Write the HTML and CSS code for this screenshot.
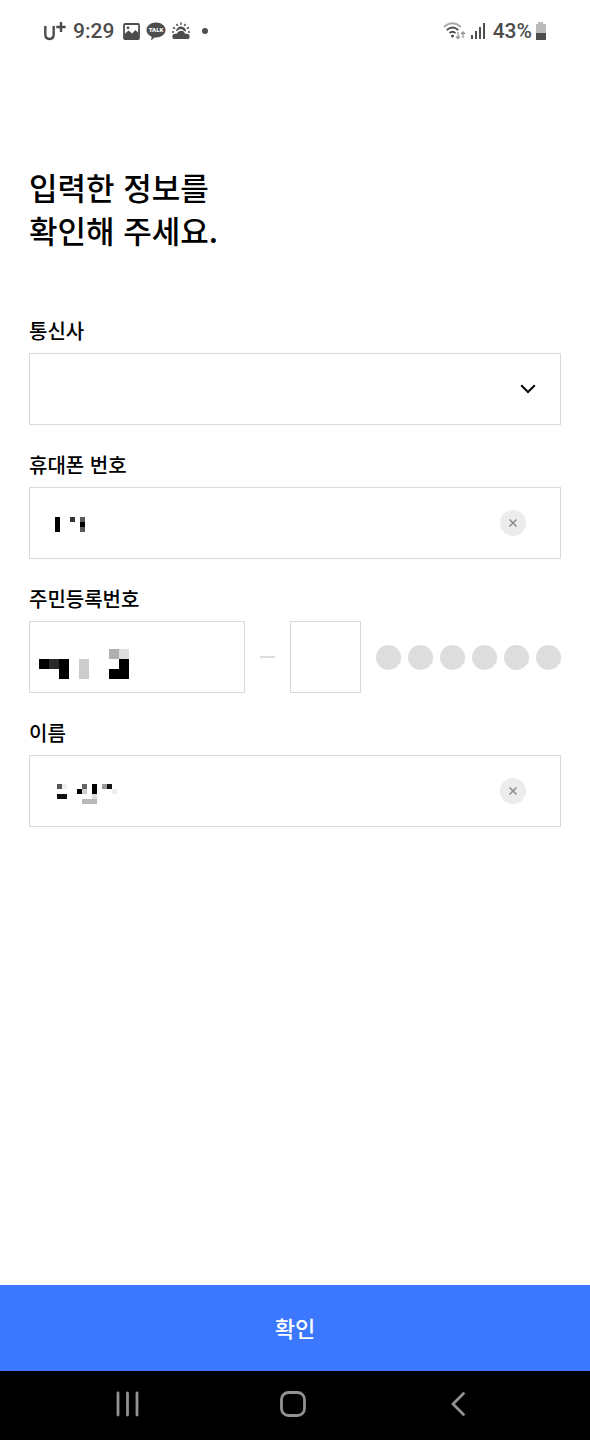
FILE: index.html
```
<!DOCTYPE html>
<html lang="ko">
<head>
    <meta charset="utf-8">
    <meta name="viewport" content="width=device-width, initial-scale=1">
    <title>입력한 정보를 확인해 주세요.</title>
    <link rel="stylesheet" href="styles.css">
</head>
<body>
    <header class="status">
        <div class="status-side">
            <svg class="carrier" width="24" height="20" viewBox="0 0 24 20">
                <path d="M2.300 5v8q0 5 4.200 5t4.200-5V5" fill="none" stroke="#4d4d4d" stroke-width="2.400"/>
                <path d="M18 1v10M13.300 6h9.400" stroke="#4d4d4d" stroke-width="2.400"/>
            </svg>
            <span class="time">9:29</span>
            <svg width="17" height="17" viewBox="0 0 17 17">
                <rect x="1" y="1" width="15" height="15" rx="1" fill="none" stroke="#4d4d4d" stroke-width="1.800"/>
                <path d="M1.500 15v-4l4-3.500 3.500 3 3.500-3.500 3 3v5z" fill="#4d4d4d"/>
                <circle cx="5" cy="4.800" r="1.400" fill="#4d4d4d"/>
            </svg>
            <svg width="20" height="19" viewBox="0 0 20 19">
                <path d="M10 .5c5.300 0 9.500 3.300 9.500 7.500s-4.200 7.500-9.500 7.500l-1.500-.1L5 18.600l.7-3.900C2.600 13.600.5 11.100.5 8 .5 3.800 4.700.5 10 .5z" fill="#4d4d4d"/>
                <text class="talk" x="10" y="10.300" text-anchor="middle">TALK</text>
            </svg>
            <svg width="18" height="18" viewBox="0 0 18 18">
                <path d="M9 .5v2.200M4.500 2l1.200 1.900M13.500 2l-1.200 1.900M1 5.500l2.200 1.200M17 5.500l-2.200 1.200M0 10h2M16 10h2" stroke="#4d4d4d" stroke-width="1.500"/>
                <path d="M4 9.300a5 4.800 0 0 1 10 .2l-2-.4a4 4 0 0 0-5.500-1.300q-1.200 1.300-2.500 1.500z" fill="#4d4d4d"/>
                <path d="M3 17a2.600 2.600 0 0 1 0-5.200l2-.3a4.200 4 0 0 1 8 .3h2a2.600 2.600 0 0 1 0 5.200z" fill="#4d4d4d"/>
            </svg>
            <span class="more"></span>
        </div>
        <div class="status-side right">
            <svg width="24" height="18" viewBox="0 0 24 18">
                <g fill="none" stroke="#4d4d4d" stroke-width="1.800">
                    <path d="M1 5q8.500-7.500 17 0" stroke="#aaa"/>
                    <path d="M3.700 8.200q5.800-5.300 11.600 0"/>
                    <path d="M6.500 11.200q3-2.800 6 0"/>
                </g>
                <circle cx="9.500" cy="14" r="1.500" fill="#4d4d4d"/>
                <path d="M15 10v6.500M13 14.500l2 2 2-2M20 16v-6M18 12l2-2 2 2" fill="none" stroke="#999" stroke-width="1.300"/>
            </svg>
            <svg width="17" height="18" viewBox="0 0 17 18" fill="#4d4d4d">
                <rect x="1" y="13" width="2" height="4"/>
                <rect x="5" y="9" width="2" height="8"/>
                <rect x="9" y="5" width="2" height="12"/>
                <rect x="13" y="1" width="2" height="16"/>
            </svg>
            <span class="percent">43%</span>
            <svg width="12" height="18" viewBox="0 0 12 18">
                <path d="M3 0h5v2h3v9H1V2h2z" fill="#bbb"/>
                <path d="M1 11h10v7H1z" fill="#4d4d4d"/>
            </svg>
        </div>
    </header>

    <main class="content">
        <h1 class="title">입력한 정보를<br>확인해 주세요.</h1>

        <form class="form" id="info">
            <div class="row">
                <label class="label" for="carrier">통신사</label>
                <div class="field">
                    <select class="box" id="carrier"><option></option></select>
                    <svg class="arrow" width="16" height="10" viewBox="0 0 16 10">
                        <path d="M1.200 1.200L8 8l6.800-6.800" fill="none" stroke="#000" stroke-width="2"/>
                    </svg>
                </div>
            </div>

            <div class="row">
                <label class="label" for="phone">휴대폰 번호</label>
                <div class="field">
                    <input class="box" id="phone" type="tel">
                    <svg class="mask" width="100" height="72" shape-rendering="crispEdges">
                        <rect x="26" y="30" width="5" height="15"/>
                        <rect x="41" y="30" width="5" height="5" fill="#333"/>
                        <rect x="51" y="30" width="5" height="15" fill="#5a5a5a"/>
                        <rect x="51" y="35" width="5" height="5"/>
                    </svg>
                    <button class="clear" type="button" aria-label="지우기">
                        <svg width="26" height="26" viewBox="0 0 26 26"><path d="M9.500 9.500l7 7M16.500 9.500l-7 7" stroke="#8c8c8c" stroke-width="1.500"/></svg>
                    </button>
                </div>
            </div>

            <div class="row">
                <label class="label" for="birth">주민등록번호</label>
                <div class="ssn">
                    <div class="field front">
                        <input class="box" id="birth" type="text" inputmode="numeric">
                        <svg class="mask" width="110" height="72" shape-rendering="crispEdges">
                            <rect x="10" y="38" width="10" height="10"/>
                            <rect x="20" y="38" width="10" height="10" fill="#2b2b2b"/>
                            <rect x="30" y="38" width="10" height="20"/>
                            <rect x="50" y="38" width="10" height="20" fill="#ccc"/>
                            <rect x="80" y="28" width="10" height="10" fill="#b0b0b0"/>
                            <rect x="90" y="28" width="10" height="10" fill="#ddd"/>
                            <rect x="90" y="38" width="10" height="10"/>
                            <rect x="80" y="48" width="20" height="10"/>
                        </svg>
                    </div>
                    <span class="dash"></span>
                    <input class="box back" type="text" inputmode="numeric" maxlength="1" aria-label="주민등록번호 뒷자리">
                    <div class="dots">
                        <i class="dot"></i><i class="dot"></i><i class="dot"></i><i class="dot"></i><i class="dot"></i><i class="dot"></i>
                    </div>
                </div>
            </div>

            <div class="row">
                <label class="label" for="name">이름</label>
                <div class="field">
                    <input class="box" id="name" type="text">
                    <svg class="mask" width="100" height="72" shape-rendering="crispEdges">
                        <rect x="28" y="29" width="5" height="5" fill="#555"/>
                        <rect x="33" y="29" width="5" height="5" fill="#eee"/>
                        <rect x="28" y="39" width="10" height="5" fill="#111"/>
                        <rect x="48" y="34" width="5" height="5"/>
                        <rect x="53" y="29" width="5" height="5" fill="#666"/>
                        <rect x="53" y="34" width="5" height="5" fill="#ccc"/>
                        <rect x="63" y="29" width="5" height="10"/>
                        <rect x="63" y="39" width="5" height="5" fill="#ddd"/>
                        <rect x="53" y="44" width="15" height="5" fill="#b8b8b8"/>
                        <rect x="73" y="29" width="5" height="5" fill="#999"/>
                        <rect x="78" y="29" width="5" height="5" fill="#151515"/>
                        <rect x="83" y="34" width="5" height="5" fill="#eee"/>
                    </svg>
                    <button class="clear" type="button" aria-label="지우기">
                        <svg width="26" height="26" viewBox="0 0 26 26"><path d="M9.500 9.500l7 7M16.500 9.500l-7 7" stroke="#8c8c8c" stroke-width="1.500"/></svg>
                    </button>
                </div>
            </div>
        </form>
    </main>

    <button class="submit" type="submit" form="info">확인</button>

    <nav class="navbar">
        <button class="nav-btn" type="button" aria-label="최근 앱">
            <svg width="24" height="26" viewBox="0 0 24 26"><path d="M2 2v22M11.500 2v22M21 2v22" stroke="#929292" stroke-width="2.800" stroke-linecap="round"/></svg>
        </button>
        <button class="nav-btn" type="button" aria-label="홈">
            <svg width="26" height="26" viewBox="0 0 26 26"><rect x="1.500" y="1.500" width="23" height="23" rx="7" fill="none" stroke="#929292" stroke-width="2.800"/></svg>
        </button>
        <button class="nav-btn" type="button" aria-label="뒤로">
            <svg width="16" height="26" viewBox="0 0 16 26"><path d="M13.500 2.500L3 13l10.500 10.500" fill="none" stroke="#929292" stroke-width="2.800" stroke-linecap="round"/></svg>
        </button>
    </nav>
</body>
</html>
```
FILE: styles.css
```
* {
    box-sizing: border-box;
}
body {
    display: flex;
    flex-direction: column;
    min-height: 100vh;
    margin: 0;
    background: #fff;
    color: #000;
    font-family: "Noto Sans CJK KR", sans-serif;
}
svg {
    display: block;
    flex: none;
}
button {
    padding: 0;
    border: 0;
    font-family: inherit;
    cursor: pointer;
}

/* status bar */
.status {
    display: flex;
    justify-content: space-between;
    height: 62px;
    padding: 0 43px;
    color: #4d4d4d;
    font: 500 21px/26px Roboto, sans-serif;
}
.status-side {
    display: flex;
    align-items: center;
    gap: 6px;
}
.status-side.right {
    gap: 3px;
}
.time {
    margin-right: 3px;
}
.percent {
    margin-left: 3px;
}
.talk {
    fill: #fff;
    font: 900 6px Roboto, sans-serif;
}
.more {
    width: 6px;
    height: 6px;
    margin-left: 6px;
    border-radius: 50%;
    background: #4d4d4d;
}

/* form */
.content {
    flex: 1;
    padding: 103px 29px 40px;
}
.title {
    margin: 0 0 65px;
    font-size: 31px;
    font-weight: 500;
    line-height: 43px;
}
.form {
    display: flex;
    flex-direction: column;
    gap: 25px;
}
.label {
    display: block;
    margin-bottom: 7px;
    font-size: 20px;
    font-weight: 500;
    line-height: 30px;
}
.field {
    position: relative;
}
.box {
    display: block;
    width: 100%;
    height: 72px;
    margin: 0;
    padding: 0 25px;
    border: 1px solid #d9d9d9;
    border-radius: 0;
    outline: 0;
    background: #fff;
    font-family: inherit;
    font-size: 20px;
    -webkit-appearance: none;
    appearance: none;
}
.arrow {
    position: absolute;
    top: 31px;
    right: 25px;
    pointer-events: none;
}
.mask {
    position: absolute;
    top: 0;
    left: 0;
    pointer-events: none;
}
.clear {
    position: absolute;
    top: 23px;
    right: 35px;
    border-radius: 50%;
    background: #ececec;
}
.ssn {
    display: flex;
    align-items: center;
    gap: 15px;
}
.front {
    flex: 1;
}
.dash {
    width: 15px;
    height: 2px;
    background: #ddd;
}
.back {
    width: 71px;
}
.dots {
    display: flex;
    gap: 7px;
}
.dot {
    width: 25px;
    height: 25px;
    border-radius: 50%;
    background: #ddd;
}

/* bottom */
.submit {
    height: 86px;
    padding-bottom: 2px;
    background: #3b78ff;
    color: #fff;
    font-size: 22px;
    font-weight: 500;
}
.navbar {
    display: flex;
    height: 69px;
    padding: 0 49px 3px 45px;
    background: #000;
}
.nav-btn {
    display: flex;
    flex: 1;
    align-items: center;
    justify-content: center;
    background: none;
}
```
